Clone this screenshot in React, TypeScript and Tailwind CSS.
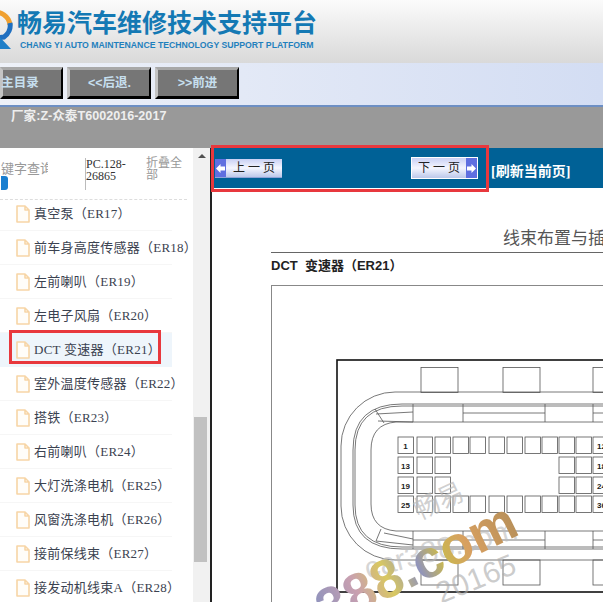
const rows = [
  "真空泵（ER17）", "前车身高度传感器（ER18）", "左前喇叭（ER19）", "左电子风扇（ER20）",
  "DCT 变速器（ER21）", "室外温度传感器（ER22）", "搭铁（ER23）", "右前喇叭（ER24）",
  "大灯洗涤电机（ER25）", "风窗洗涤电机（ER26）", "接前保线束（ER27）", "接发动机线束A（ER28）",
];

const cols = [398, 417, 435, 453, 470, 489, 507, 525, 542, 559, 576, 593];
const cellRows = [
  { y: 437, label: ["1", "12"], all: true },
  { y: 457, label: ["13", "18"], all: false },
  { y: 477, label: ["19", "24"], all: false },
  { y: 496, label: ["25", "36"], all: true },
];

function Logo() {
  return (
    <svg width="13" height="42" viewBox="0 0 13 42" className="shrink-0">
      <path d="M-8 4 A14 14 0 0 1 10 16" fill="none" stroke="#f0a030" strokeWidth="5" />
      <path d="M10 14 A14 14 0 0 1 4 28 L-4 29" fill="none" stroke="#1f6fc0" strokeWidth="5" />
      <path d="M-2 26 L11 40 L-2 40 Z" fill="#1f7fc8" />
    </svg>
  );
}

function DocIcon() {
  return (
    <svg width="14" height="18" viewBox="0 0 14 18" className="shrink-0">
      <path d="M1 1 H9 L13 5 V17 H1 Z M9 1 V5 H13" fill="#fffdf9" stroke="#f7d5a6" strokeWidth="1.6" strokeLinejoin="round" />
    </svg>
  );
}

function NavButton({ label, className }: { label: string; className: string }) {
  return (
    <div className={`h-[32px] flex items-center justify-center whitespace-nowrap bg-[#767676] border-t-[3px] border-l-[3px] border-r-[2px] border-b-[3px] border-t-[#a8a8a8] border-l-[#c4c4c4] border-r-black border-b-black text-[12.5px] font-bold text-[#c6dfee] ${className}`}>
      {label}
    </div>
  );
}

function PageButton({ label, dir }: { label: string; dir: "prev" | "next" }) {
  const arrow = (
    <div className="w-[11px] self-stretch bg-[#5f6fe0] flex items-center justify-center">
      <svg width="9" height="9" viewBox="0 0 9 9">
        <path d={dir === "prev" ? "M0 4.5 L4.5 0 V2.5 H9 V6.5 H4.5 V9 Z" : "M9 4.5 L4.5 0 V2.5 H0 V6.5 H4.5 V9 Z"} fill="#fff" />
      </svg>
    </div>
  );
  return (
    <div className={`w-[67px] flex items-center bg-gradient-to-b from-[#c9d0f4] via-[#f5f6fe] to-[#bcc8ea] border-b border-[#8fa3d8] text-[12px] text-[#222] font-['Liberation_Serif','Noto_Sans_CJK_SC',serif] ${dir === "next" ? "h-[22px] border border-white" : "h-[19px]"}`}>
      {dir === "prev" && arrow}
      <span className="flex-1 text-center whitespace-pre">{label}</span>
      {dir === "next" && arrow}
    </div>
  );
}

function Diagram() {
  return (
    <svg width="267" height="240" viewBox="336 358 267 240" className="block" fill="none" stroke="#555" strokeWidth="0.8">
      <rect x="337" y="360" width="280" height="232" stroke="#111" strokeWidth="1.6" />
      {[421, 503, 593].map((x) => (
        <g key={x}>
          <rect x={x} y="367.5" width="37" height="25" />
          <rect x={x} y="560" width="37" height="25" />
        </g>
      ))}
      <path d="M610 392 H395 A54 54 0 0 0 341 446 V506 A54 54 0 0 0 395 560 H610" />
      <path d="M610 404 H402 Q353 404 353 450 V505 Q353 549 402 549 H610" />
      <path d="M610 406 H402 Q355 406 355 450 V505 Q355 547 402 547 H610" />
      <path d="M610 422 H396 Q371 424 371 450 V504 Q371 529 396 531 H610" />
      <path d="M375 409 L384 423 M376 414 L413 412 M378 421 L413 422 M381 529 L376 541 M376 541 L413 545 M384 533 L413 539" />
      <path d="M413 404 V422 M463 404 V422 M545 404 V422 M593 404 V422 M463 413 H545 M593 413 H610" />
      <path d="M413 531 V549 M463 531 V549 M545 531 V549 M593 531 V549 M413 540 H545 M593 540 H610" />
      {cellRows.map((row) =>
        cols.map((x, i) =>
          row.all || i < 3 || i > 8 ? <rect key={`${row.y}-${x}`} x={x} y={row.y} width="15.5" height="16.5" /> : null
        )
      )}
      {cellRows.map((row) => (
        <g key={row.y} fill="#222" stroke="none" fontFamily="Liberation Sans, sans-serif" fontSize="8" fontWeight="700">
          <text x="405.5" y={row.y + 11.5} textAnchor="middle">{row.label[0]}</text>
          <text x="597" y={row.y + 11.5}>{row.label[1]}</text>
        </g>
      ))}
    </svg>
  );
}

export default function App() {
  return (
    <div className="relative w-[603px] h-[602px] overflow-hidden bg-white flex flex-col font-['Liberation_Sans','Noto_Sans_CJK_SC',sans-serif]">
      {/* Header */}
      <div className="h-[63px] shrink-0 flex items-start gap-[4px] pt-[9px] bg-gradient-to-b from-[#fbfbfb] to-[#d9d9d9]">
        <Logo />
        <div className="flex flex-col">
          <div className="text-[25px] leading-[29px] font-bold text-[#1479b4] whitespace-nowrap">畅易汽车维修技术支持平台</div>
          <div className="mt-[1px] ml-[3px] text-[8.7px] leading-[12px] font-bold text-[#1f80bd] whitespace-nowrap">CHANG YI AUTO MAINTENANCE TECHNOLOGY SUPPORT PLATFORM</div>
        </div>
      </div>

      {/* Navigation */}
      <div className="h-[44px] shrink-0 flex items-start gap-[4px] pt-[4px] bg-gradient-to-r from-[#eef1f8] to-[#d3ddf3] border-b-2 border-[#6d8fc4]">
        <NavButton label="主目录" className="w-[63px] pr-[24px] border-l-0" />
        <NavButton label="<<后退." className="w-[84px]" />
        <NavButton label=">>前进" className="w-[84px]" />
      </div>

      {/* Info bar */}
      <div className="h-[41px] shrink-0 bg-[#999999] pl-[11px] pt-[1px] text-[12.6px] leading-[17px] font-bold text-[#eeeeee] whitespace-nowrap">
        厂家:Z-众泰T6002016-2017
      </div>

      {/* Body */}
      <div className="flex flex-1 min-h-0">
        {/* Sidebar */}
        <div className="w-[193px] shrink-0 flex flex-col overflow-hidden">
          <div className="shrink-0 mr-[6px] h-[52px] flex items-start text-[#999] border-b border-dashed border-[#dddddd]">
            <div className="w-[85px] shrink-0 pt-[13px] pl-[1px] overflow-hidden">
              <div className="w-[47px] overflow-hidden whitespace-nowrap text-[13px] leading-[16px]">键字查询</div>
              <div className="mt-[-1px] w-[7px] h-[14px] bg-[#1a7fd0] rounded-r-[3px]" />
            </div>
            <div className="w-[61px] shrink-0 mt-[10px] h-[32px] border-l border-[#bbbbbb] text-[12px] leading-[12px] text-[#333] font-['Liberation_Serif',serif]">
              PC.128-<br />26865
            </div>
            <div className="w-[38px] mt-[9px] text-[12px] leading-[12px] text-[#999]">折叠全部</div>
          </div>
          <div className="flex flex-col">
            {rows.map((r, i) => (
              <div key={r} className={`shrink-0 flex items-center gap-[4px] pl-[16px] whitespace-nowrap border-b w-[172px] ${i === 0 ? "h-[31px] pb-[3px]" : "h-[34px]"} ${i === 4 ? "bg-[#eef5fb] border-transparent" : "border-[#f6f6f6]"}`}>
                <DocIcon />
                <span className="text-[13px] tracking-[0.25px] text-[#3b4250] font-['Liberation_Serif','Noto_Sans_CJK_SC',serif]">{r}</span>
              </div>
            ))}
          </div>
        </div>

        {/* Scrollbar */}
        <div className="w-[17px] shrink-0 bg-[#f1f1f1] flex flex-col items-center">
          <div className="mt-[6px] w-0 h-0 border-l-[4px] border-r-[4px] border-b-[4px] border-l-transparent border-r-transparent border-b-[#505050]" />
          <div className="mt-[259px] ml-[-3px] w-[13px] h-[145px] bg-[#c1c1c1]" />
        </div>

        {/* Main */}
        <div className="flex-1 min-w-0 border-l-2 border-[#222] flex flex-col">
          <div className="h-[40px] shrink-0 bg-[#006196] flex items-start pl-[3px] text-white">
            <div className="w-[263px] flex justify-between pt-[9px] items-start">
              <div className="pt-[2px]"><PageButton label="上 一 页" dir="prev" /></div>
              <PageButton label="下 一 页" dir="next" />
            </div>
            <div className="ml-[13px] pt-[16px] text-[14px] leading-[16px] font-bold whitespace-nowrap font-['Liberation_Serif','Noto_Sans_CJK_SC',serif]">[刷新当前页]</div>
          </div>
          <div className="flex-1 pl-[59px] pt-[41px] overflow-hidden">
            <div className="border-b border-[#666] h-[24px] pl-[232px] text-[17px] leading-[20px] text-[#555] whitespace-nowrap font-['Liberation_Serif','Noto_Sans_CJK_SC',serif]">线束布置与插</div>
            <div className="mt-[4px] text-[13px] leading-[17px] font-bold text-[#222] whitespace-pre">DCT  变速器（ER21）</div>
            <div className="mt-[11px] border-t border-l border-[#888] h-[400px] pl-[64px] pt-[72px]">
              <Diagram />
            </div>
          </div>
        </div>
      </div>

      {/* Overlays */}
      <div className="absolute left-[211px] top-[145px] w-[278px] h-[47px] border-[3px] border-[#e8383d]" />
      <div className="absolute left-[9px] top-[330px] w-[152px] h-[34px] border-[3px] border-[#e8383d]" />

      {/* Watermarks */}
      <div className="absolute left-[413px] top-[482px] -rotate-[25deg] text-[26px] text-[#bbb]/70 whitespace-nowrap pointer-events-none">畅易</div>
      <div className="absolute left-[362px] top-[526px] -rotate-[15deg] text-[30px] text-[#bbb]/60 whitespace-nowrap pointer-events-none">car388.com</div>
      <div className="absolute left-[434px] top-[556px] -rotate-[22deg] text-[30px] text-[#aaa]/60 whitespace-nowrap pointer-events-none">20165</div>
      <div className="absolute left-[308px] top-[534px] -rotate-[26deg] text-[54px] leading-[60px] font-bold whitespace-nowrap pointer-events-none text-transparent bg-clip-text bg-[linear-gradient(90deg,#8f93bd_0%,#c9a0b0_20%,#d9c860_35%,#8f93bd_50%,#c9b850_62%,#d8a060_75%,#b8905a_100%)]">388.com</div>
    </div>
  );
}
